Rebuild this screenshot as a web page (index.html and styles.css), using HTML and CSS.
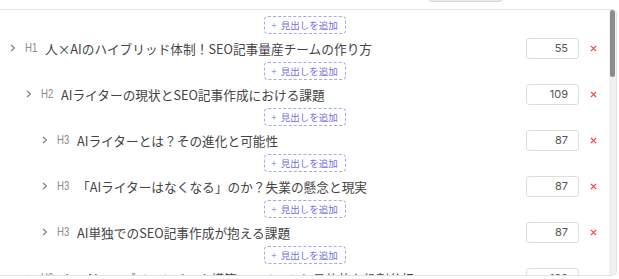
FILE: index.html
```html
<!DOCTYPE html>
<html lang="ja">
<head>
    <meta charset="UTF-8">
    <meta name="viewport" content="width=device-width, initial-scale=1.0">
    <title>見出し構成</title>
    <link rel="stylesheet" href="styles.css">
</head>
<body>
    <div class="toolbar">
        <button class="tool-btn"></button>
    </div>
    <div class="panel">
        <div class="outline">
            <div class="add-wrap"><button class="add-btn"><span class="plus">+</span>見出しを追加</button></div>
            <div class="row lv1">
                <svg class="chev" viewBox="0 0 6 8"><polyline points="1,1 4.5,4 1,7"/></svg>
                <span class="tag">H1</span>
                <span class="title">人×AIのハイブリッド体制！SEO記事量産チームの作り方</span>
                <input class="count" value="55">
                <button class="del"><svg viewBox="0 0 8 8"><path d="M1 1L7 7M7 1L1 7"/></svg></button>
            </div>

            <div class="add-wrap"><button class="add-btn"><span class="plus">+</span>見出しを追加</button></div>
            <div class="row lv2">
                <svg class="chev" viewBox="0 0 6 8"><polyline points="1,1 4.5,4 1,7"/></svg>
                <span class="tag">H2</span>
                <span class="title">AIライターの現状とSEO記事作成における課題</span>
                <input class="count" value="109">
                <button class="del"><svg viewBox="0 0 8 8"><path d="M1 1L7 7M7 1L1 7"/></svg></button>
            </div>

            <div class="add-wrap"><button class="add-btn"><span class="plus">+</span>見出しを追加</button></div>
            <div class="row lv3">
                <svg class="chev" viewBox="0 0 6 8"><polyline points="1,1 4.5,4 1,7"/></svg>
                <span class="tag">H3</span>
                <span class="title">AIライターとは？その進化と可能性</span>
                <input class="count" value="87">
                <button class="del"><svg viewBox="0 0 8 8"><path d="M1 1L7 7M7 1L1 7"/></svg></button>
            </div>

            <div class="add-wrap"><button class="add-btn"><span class="plus">+</span>見出しを追加</button></div>
            <div class="row lv3">
                <svg class="chev" viewBox="0 0 6 8"><polyline points="1,1 4.5,4 1,7"/></svg>
                <span class="tag">H3</span>
                <span class="title">「AIライターはなくなる」のか？失業の懸念と現実</span>
                <input class="count" value="87">
                <button class="del"><svg viewBox="0 0 8 8"><path d="M1 1L7 7M7 1L1 7"/></svg></button>
            </div>

            <div class="add-wrap"><button class="add-btn"><span class="plus">+</span>見出しを追加</button></div>
            <div class="row lv3">
                <svg class="chev" viewBox="0 0 6 8"><polyline points="1,1 4.5,4 1,7"/></svg>
                <span class="tag">H3</span>
                <span class="title">AI単独でのSEO記事作成が抱える課題</span>
                <input class="count" value="87">
                <button class="del"><svg viewBox="0 0 8 8"><path d="M1 1L7 7M7 1L1 7"/></svg></button>
            </div>

            <div class="add-wrap"><button class="add-btn"><span class="plus">+</span>見出しを追加</button></div>
            <div class="row lv2">
                <svg class="chev" viewBox="0 0 6 8"><polyline points="1,1 4.5,4 1,7"/></svg>
                <span class="tag">H2</span>
                <span class="title">人×AIハイブリッドチーム構築のメリットと具体的な役割分担</span>
                <input class="count" value="109">
                <button class="del"><svg viewBox="0 0 8 8"><path d="M1 1L7 7M7 1L1 7"/></svg></button>
            </div>

            <div class="add-wrap"><button class="add-btn"><span class="plus">+</span>見出しを追加</button></div>
            <div class="row lv3">
                <svg class="chev" viewBox="0 0 6 8"><polyline points="1,1 4.5,4 1,7"/></svg>
                <span class="tag">H3</span>
                <span class="title">ハイブリッドチームがもたらす3つのメリット</span>
                <input class="count" value="87">
                <button class="del"><svg viewBox="0 0 8 8"><path d="M1 1L7 7M7 1L1 7"/></svg></button>
            </div>
        </div>
        <div class="scrollbar">
            <div class="thumb"></div>
        </div>
    </div>
</body>
</html>
```

FILE: styles.css
```css
* {
    margin: 0;
    padding: 0;
    box-sizing: border-box;
}

body {
    font-family: "Noto Sans CJK JP", "Noto Sans", sans-serif;
    background: #fff;
    color: #333;
    overflow: hidden;
}

/* top toolbar (only the bottom of the button shows) */
.toolbar {
    height: 9px;
    overflow: hidden;
    padding-left: 428px;
}

.tool-btn {
    display: block;
    width: 75px;
    height: 20px;
    margin-top: -18px;
    background: #ebebef;
    border: 1px solid #d6d6de;
    border-radius: 4px;
}

/* outline panel */
.panel {
    width: 617px;
    height: 267px;
    border: 1px solid #e2e2e2;
    border-left: none;
    border-radius: 0 5px 5px 0;
    overflow: hidden;
    display: flex;
}

.outline {
    flex: 1;
    overflow: hidden;
    padding: 6px 0;
}

.scrollbar {
    width: 7px;
    background: #f1f1f1;
    padding: 0 1px;
}

.thumb {
    height: 67px;
    background: #8c8c8c;
    border-radius: 3px;
}

.add-wrap {
    height: 18px;
    display: flex;
    justify-content: center;
}

.add-btn {
    width: 82px;
    height: 18px;
    display: flex;
    align-items: center;
    justify-content: center;
    font-family: inherit;
    font-size: 9.5px;
    color: #7070dc;
    background: #fff;
    border: 1px dashed #a4a8f2;
    border-radius: 4px;
    cursor: pointer;
}

.plus {
    margin-right: 4px;
    color: #9496e6;
}

.row {
    height: 28px;
    display: flex;
    align-items: center;
    padding-right: 8px;
}

.row.lv1 { padding-left: 10px; }
.row.lv2 { padding-left: 26px; }
.row.lv3 { padding-left: 42px; }

.chev {
    width: 6px;
    height: 8px;
    flex-shrink: 0;
    fill: none;
    stroke: #7a7a7a;
    stroke-width: 1.1;
}

.tag {
    margin-left: 9px;
    width: 20px;
    font-family: "Liberation Sans", sans-serif;
    font-size: 12px;
    color: #8a8a8a;
    transform: scaleX(0.8);
    transform-origin: left center;
    flex-shrink: 0;
}

.title {
    flex: 1;
    font-size: 12.7px;
    color: #444;
    white-space: nowrap;
    overflow: hidden;
}

.count {
    width: 53px;
    height: 21px;
    border: 1px solid #dedede;
    border-radius: 3px;
    padding-right: 10px;
    text-align: right;
    font-family: "Inter", "Noto Sans", sans-serif;
    font-size: 11px;
    color: #555;
    flex-shrink: 0;
}

.del {
    width: 16px;
    height: 16px;
    margin-left: 6px;
    border: none;
    background: none;
    display: flex;
    align-items: center;
    justify-content: center;
    cursor: pointer;
}

.del svg {
    width: 7px;
    height: 7px;
    fill: none;
    stroke: #ec4b4b;
    stroke-width: 1.5;
}
```
